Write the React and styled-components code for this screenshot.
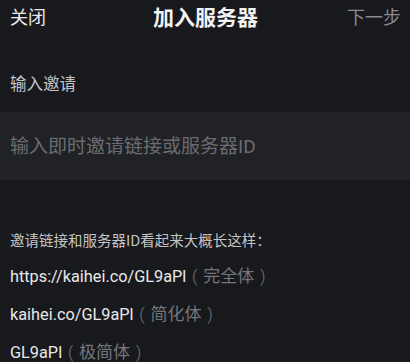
import React from "react";
import styled, { createGlobalStyle } from "styled-components";

const GlobalStyle = createGlobalStyle`
  html, body {
    margin: 0;
    padding: 0;
    background: #18191d;
  }
  body {
    font-family: Roboto, "Noto Sans CJK SC", sans-serif;
  }
`;

const examples = [
  { link: "https://kaihei.co/GL9aPl", kind: "完全体" },
  { link: "kaihei.co/GL9aPl", kind: "简化体" },
  { link: "GL9aPl", kind: "极简体" },
];

export default function App() {
  return (
    <>
      <GlobalStyle />
      <Page>
        <Header>
          <HeaderButton>关闭</HeaderButton>
          <Title>加入服务器</Title>
          <HeaderButton $muted>下一步</HeaderButton>
        </Header>
        <Label>输入邀请</Label>
        <InputBand>
          <Input placeholder="输入即时邀请链接或服务器ID" />
        </InputBand>
        <Hint>邀请链接和服务器ID看起来大概长这样：</Hint>
        <Examples>
          {examples.map((e) => (
            <Example key={e.link}>
              {e.link}
              <Note>
                <Paren>(</Paren>
                {e.kind}
                <Paren>)</Paren>
              </Note>
            </Example>
          ))}
        </Examples>
      </Page>
    </>
  );
}

const Page = styled.div`
  width: 410px;
  height: 362px;
  overflow: hidden;
  background: #18191d;
  color: #e6e6e8;
`;

const Header = styled.div`
  display: grid;
  grid-template-columns: 1fr auto 1fr;
  align-items: center;
  height: 32px;
  padding: 0 9px 0 10px;
`;

const HeaderButton = styled.div`
  font-family: "Noto Sans CJK SC", sans-serif;
  font-size: 18px;
  line-height: 32px;
  color: ${(p) => (p.$muted ? "#8a8b8f" : "#e8e8ea")};
  justify-self: ${(p) => (p.$muted ? "end" : "start")};
`;

const Title = styled.div`
  font-family: "Noto Sans CJK SC", sans-serif;
  font-size: 21px;
  font-weight: 700;
  line-height: 32px;
  color: #f2f2f4;
`;

const Label = styled.div`
  font-family: "Noto Sans CJK SC", sans-serif;
  font-size: 16.5px;
  line-height: 24px;
  color: #c4c4c8;
  padding: 39px 10px 0;
  margin-bottom: 17px;
`;

const InputBand = styled.div`
  display: flex;
  align-items: center;
  height: 68px;
  background: #212226;
  padding: 0 10px;
`;

const Input = styled.input`
  flex: 1;
  border: none;
  outline: none;
  background: transparent;
  padding: 0;
  font-family: Roboto, "Noto Sans CJK SC", sans-serif;
  font-size: 19px;
  color: #e6e6e8;
  &::placeholder {
    color: #6b6c71;
  }
`;

const Hint = styled.div`
  font-family: "Noto Sans CJK SC", sans-serif;
  font-size: 14.5px;
  line-height: 20px;
  color: #c4c4c8;
  padding: 0 10px;
  margin-top: 50px;
  margin-bottom: 7px;
`;

const Examples = styled.div`
  display: flex;
  flex-direction: column;
  padding: 0 10px;
`;

const Example = styled.div`
  font-size: 16.3px;
  line-height: 36px;
  color: #e8e8ea;
`;

const Note = styled.span`
  font-family: "Noto Sans CJK SC", sans-serif;
  font-size: 17px;
  color: #75767b;
`;

const Paren = styled.span`
  display: inline-block;
  width: 1em;
  text-align: center;
  font-family: Roboto, sans-serif;
  font-weight: 300;
`;
